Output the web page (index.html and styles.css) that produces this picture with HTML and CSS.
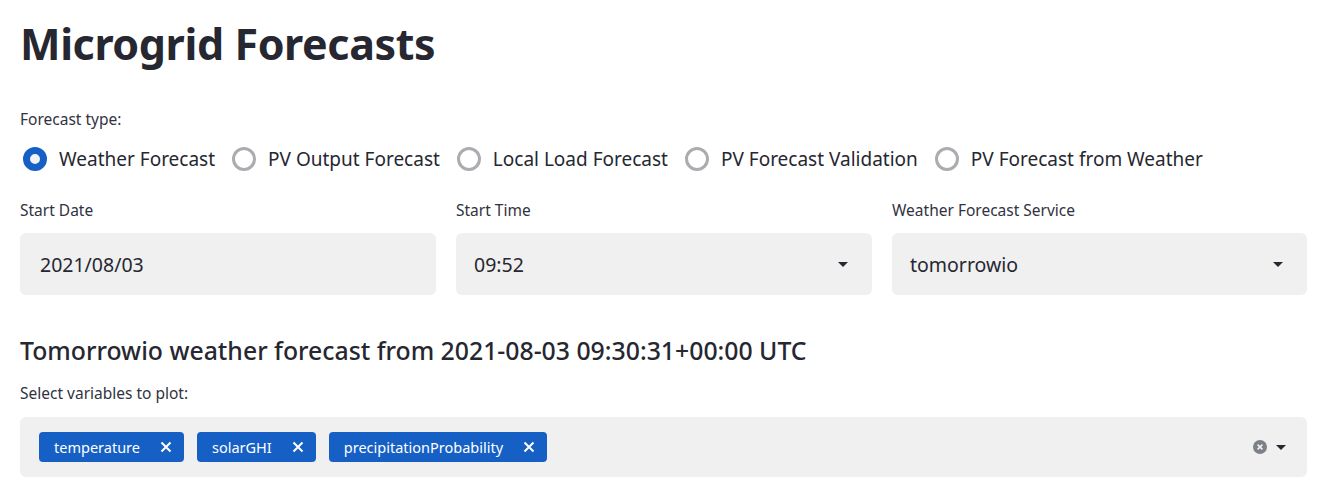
FILE: index.html
```html
<!DOCTYPE html>
<html>
<head>
<meta charset="utf-8">
<link rel="stylesheet" href="styles.css">
</head>
<body>
<main class="page">
  <h1 class="title">Microgrid Forecasts</h1>

  <div class="field radios-field">
    <div class="label">Forecast type:</div>
    <div class="radios">
      <label class="radio checked"><span class="dot"></span><span>Weather Forecast</span></label>
      <label class="radio"><span class="dot"></span><span>PV Output Forecast</span></label>
      <label class="radio"><span class="dot"></span><span>Local Load Forecast</span></label>
      <label class="radio"><span class="dot"></span><span>PV Forecast Validation</span></label>
      <label class="radio"><span class="dot"></span><span>PV Forecast from Weather</span></label>
    </div>
  </div>

  <div class="cols">
    <div class="field">
      <div class="label">Start Date</div>
      <div class="box"><span class="value">2021/08/03</span></div>
    </div>
    <div class="field">
      <div class="label">Start Time</div>
      <div class="box select"><span class="value">09:52</span><span class="caret"></span></div>
    </div>
    <div class="field">
      <div class="label">Weather Forecast Service</div>
      <div class="box select"><span class="value">tomorrowio</span><span class="caret"></span></div>
    </div>
  </div>

  <h3 class="subtitle">Tomorrowio weather forecast from 2021-08-03 09:30:31+00:00 UTC</h3>

  <div class="field">
    <div class="label">Select variables to plot:</div>
    <div class="box multi">
      <div class="tags">
        <span class="tag">temperature<svg class="x" viewBox="0 0 12 12"><path d="M1.5 1.5L10.5 10.5M10.5 1.5L1.5 10.5"/></svg></span>
        <span class="tag">solarGHI<svg class="x" viewBox="0 0 12 12"><path d="M1.5 1.5L10.5 10.5M10.5 1.5L1.5 10.5"/></svg></span>
        <span class="tag">precipitationProbability<svg class="x" viewBox="0 0 12 12"><path d="M1.5 1.5L10.5 10.5M10.5 1.5L1.5 10.5"/></svg></span>
      </div>
      <div class="controls">
        <svg class="clear" viewBox="0 0 14 14"><circle cx="7" cy="7" r="7"/><path d="M4.6 4.6L9.4 9.4M9.4 4.6L4.6 9.4"/></svg>
        <span class="caret"></span>
      </div>
    </div>
  </div>
</main>
</body>
</html>
```

FILE: styles.css
```css
* { box-sizing: border-box; }
html, body { margin: 0; padding: 0; background: #fff; }
body {
  font-family: "Noto Sans", "Open Sans", sans-serif;
  color: #262730;
}
.page {
  width: 1287px;
  margin-left: 20px;
  padding-top: 14px;
}
.title {
  margin: 0;
  font-size: 43px;
  font-weight: 700;
  line-height: 60px;
  letter-spacing: -0.4px;
}
.field { display: flex; flex-direction: column; }
.label {
  font-size: 15.5px;
  line-height: 20px;
  color: #31333f;
}
.radios-field { margin-top: 35px; }
.radios {
  display: flex;
  align-items: center;
  gap: 14px;
  margin-top: 15px;
}
.radio {
  display: flex;
  align-items: center;
  gap: 12px;
  font-size: 19px;
  line-height: 30px;
}
.dot {
  width: 24px;
  height: 24px;
  border-radius: 50%;
  border: 3px solid #acacb0;
  background: #fff;
  margin-left: 3px;
}
.checked .dot {
  border: 7.5px solid #1660c5;
  background: #f0f2f6;
}
.cols {
  display: grid;
  grid-template-columns: 416px 416px 415px;
  column-gap: 20px;
  margin-top: 26px;
}
.cols .label { margin-bottom: 13px; }
.box {
  background: #f0f0f0;
  border-radius: 6px;
  height: 62px;
  display: flex;
  align-items: center;
  padding: 0 20px;
  font-size: 19.5px;
}
.select { padding-right: 24px; justify-content: space-between; padding-left: 18px; }
.caret {
  width: 0; height: 0;
  border-left: 5px solid transparent;
  border-right: 5px solid transparent;
  border-top: 5px solid #262730;
}
.subtitle {
  margin: 39px 0 0;
  font-size: 24.8px;
  font-weight: 500;
  line-height: 32px;
}
.subtitle + .field { margin-top: 17px; }
.subtitle + .field .label { margin-bottom: 14px; }
.multi {
  height: 60px;
  padding: 0 21px 0 19px;
  justify-content: space-between;
}
.tags { display: flex; gap: 13px; }
.tag {
  display: flex;
  align-items: center;
  height: 30px;
  padding: 0 12px 0 15px;
  background: #1660c5;
  color: #fff;
  border-radius: 4px;
  font-size: 14.5px;
  gap: 12px;
}
.x { width: 12px; height: 12px; fill: none; stroke: #fff; stroke-width: 2; }
.tag .x { margin-left: 8px; }
.controls { display: flex; align-items: center; gap: 9px; }
.clear { width: 14px; height: 14px; }
.clear circle { fill: #7e8088; }
.clear path { stroke: #f0f0f0; stroke-width: 1.6; }
```
